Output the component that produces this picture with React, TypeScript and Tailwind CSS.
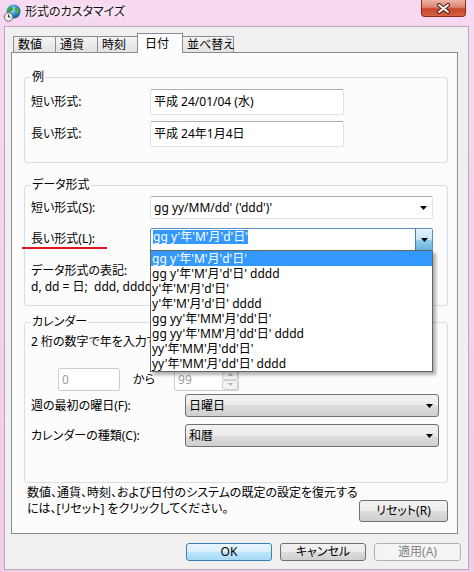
import React from 'react';

const grayFace =
  'bg-[linear-gradient(to_bottom,#f2f2f2_0%,#ebebeb_50%,#dddddd_50%,#cfcfcf_100%)] border border-[#707070] rounded-[3px]';

function Arrow() {
  return (
    <svg width="7" height="4" viewBox="0 0 7 4">
      <path d="M0 0h7L3.5 4z" fill="#000" />
    </svg>
  );
}

function GlobeIcon() {
  return (
    <svg width="18" height="18" viewBox="0 0 18 18" className="ml-[3px] mt-[4px] shrink-0">
      <defs>
        <radialGradient id="globe" cx="40%" cy="35%" r="70%">
          <stop offset="0" stopColor="#c8ecff" />
          <stop offset="0.55" stopColor="#2f8fd8" />
          <stop offset="1" stopColor="#0c4b95" />
        </radialGradient>
      </defs>
      <circle cx="10.5" cy="7.5" r="7" fill="url(#globe)" />
      <path d="M7.5 2.5c2 0 3 1.5 2.5 3s-2 1-2.5 2.5S6.5 10 5.5 9 5 3.5 7.5 2.5z" fill="#3fa33a" />
      <path d="M12.5 4c1.5-.5 3 .5 3.5 2s-.5 3-1.5 3.5-1.5-1-2-2S11 4.5 12.5 4z" fill="#4cae3c" />
      <circle cx="5.5" cy="13" r="4.3" fill="#ececec" stroke="#6f6f6f" strokeWidth="1" />
      <path d="M5.5 10.5V13h2" stroke="#333" strokeWidth="1" fill="none" />
    </svg>
  );
}

function CloseGlyph() {
  return (
    <svg width="13" height="11" viewBox="0 0 13 11">
      <path d="M2 2l9 7M11 2l-9 7" stroke="#4a1d16" strokeWidth="4" strokeLinecap="round" />
      <path d="M2 2l9 7M11 2l-9 7" stroke="#fff" strokeWidth="2" strokeLinecap="round" />
    </svg>
  );
}

function Tab({ label, width, first }: { label: string; width: string; first?: boolean }) {
  return (
    <div
      className={
        'h-[16px] flex items-center pl-[4px] whitespace-nowrap border border-b-0 border-[#898c95] bg-[linear-gradient(to_bottom,#f3f3f3,#e2e2e2)] ' +
        width +
        (first ? '' : ' -ml-px')
      }
    >
      {label}
    </div>
  );
}

function TextRow({ label, value }: { label: string; value: string }) {
  return (
    <div className="flex items-center">
      <div className="w-[119px] shrink-0">{label}</div>
      <div className="w-[194px] h-[26px] flex items-center px-[3px] bg-white border border-[#dde2e8] border-t-[#abadb3] rounded-[2px]">
        {value}
      </div>
    </div>
  );
}

function GrayCombo({ label, value }: { label: string; value: string }) {
  return (
    <div className="flex items-center">
      <div className="w-[154px] shrink-0">{label}</div>
      <div className={'w-[254px] h-[23px] flex items-center pl-[3px] pr-[5px] ' + grayFace}>
        <span className="flex-1">{value}</span>
        <Arrow />
      </div>
    </div>
  );
}

const LONG_FORMATS = [
  "gg y'年'M'月'd'日'",
  "gg y'年'M'月'd'日' dddd",
  "y'年'M'月'd'日'",
  "y'年'M'月'd'日' dddd",
  "gg yy'年'MM'月'dd'日'",
  "gg yy'年'MM'月'dd'日' dddd",
  "yy'年'MM'月'dd'日'",
  "yy'年'MM'月'dd'日' dddd",
];

export default function App() {
  return (
    <div className="w-[474px] h-[572px] flex flex-col overflow-hidden bg-[linear-gradient(to_bottom,#f7d8f1,#f1cbea)] font-['Noto_Sans','Noto_Sans_CJK_JP',sans-serif] [font-feature-settings:'palt'] text-[12px] leading-[16px] text-black">
      {/* title bar */}
      <div className="h-[26px] shrink-0 flex items-start">
        <GlobeIcon />
        <div className="ml-[4px] mt-[4px] text-[#111] [text-shadow:0_0_6px_#fff,0_0_10px_#fff]">
          形式のカスタマイズ
        </div>
        <div className="ml-auto mr-[8px] w-[45px] h-[17px] flex items-center justify-center rounded-b-[4px] border border-t-0 border-[#8e2c1e] bg-[linear-gradient(to_bottom,#eeb5a6_0%,#de8470_45%,#c9452e_55%,#d6603f_100%)]">
          <CloseGlyph />
        </div>
      </div>

      {/* client area */}
      <div className="flex-1 ml-[4px] mr-[5px] mb-[2px] bg-[#f0f0f0] border border-[#b9a9b6] flex flex-col pt-[6px] pl-[6px]">
        {/* tabs */}
        <div className="h-[19px] flex items-end pl-[2px]">
          <Tab label="数値" width="w-[43px]" first />
          <Tab label="通貨" width="w-[43px]" />
          <Tab label="時刻" width="w-[43px]" />
          <div className="relative z-10 -ml-[3px] -mb-px h-[20px] w-[46px] pl-[7px] pt-[2px] bg-[#fcfcfc] border border-b-0 border-[#898c95]">
            日付
          </div>
          <Tab label="並べ替え" width="w-[52px]" />
        </div>

        {/* tab page */}
        <div className="w-[447px] h-[482px] shrink-0 bg-[#fcfcfc] border border-[#898c95] flex flex-col pl-[12px] pr-[9px]">
          {/* 例 */}
          <fieldset className="mt-[16px] border border-[#d5dfe5] rounded-[3px] pl-[6px] pt-[4px] pb-[15px]">
            <legend className="px-[1px]">例</legend>
            <div className="flex flex-col gap-[6px]">
              <TextRow label="短い形式:" value="平成 24/01/04 (水)" />
              <TextRow label="長い形式:" value="平成 24年1月4日" />
            </div>
          </fieldset>

          {/* データ形式 */}
          <fieldset className="mt-[14px] border border-[#d5dfe5] rounded-[3px] pl-[6px] pt-[3px] pb-[10px]">
            <legend className="px-[1px]">データ形式</legend>
            <div className="flex items-center">
              <div className="w-[119px] shrink-0">短い形式(S):</div>
              <div className="w-[283px] h-[23px] flex items-center pl-[3px] pr-[5px] bg-white border border-[#dde2e8] border-t-[#abadb3] rounded-[2px]">
                <span className="flex-1 whitespace-pre">gg yy/MM/dd' ('ddd')'</span>
                <Arrow />
              </div>
            </div>
            <div className="mt-[9px] flex items-center">
              <div className="w-[119px] shrink-0">
                <span className="inline-block -ml-[9px] pl-[9px] pr-[12px] border-b-2 border-[#e0141e]">長い形式(L):</span>
              </div>
              <div className="relative w-[283px] h-[23px] flex bg-white border border-[#5b8fc2] rounded-[2px]">
                <div className="flex-1 flex items-start pt-[1px] pl-[2px]">
                  <span className="h-[14px] leading-[14px] bg-[#3399ff] text-white">gg y'年'M'月'd'日'</span>
                </div>
                <div className="w-[17px] flex items-center justify-center border-l border-[#3c7fb1] bg-[linear-gradient(to_bottom,#e5f4fc_0%,#c4e5f6_50%,#98d1ef_50%,#68b3db_100%)]">
                  <Arrow />
                </div>
                {/* open drop-down list */}
                <div className="absolute left-[-1px] top-full w-[283px] z-20 bg-white border border-[#646464] shadow-[3px_3px_3px_rgba(0,0,0,0.3)] flex flex-col">
                  {LONG_FORMATS.map((f, i) => (
                    <div
                      key={f}
                      className={
                        'h-[15px] leading-[15px] pl-[1px] whitespace-pre ' +
                        (i === 0 ? 'bg-[#3399ff] text-white' : '')
                      }
                    >
                      {f}
                    </div>
                  ))}
                </div>
              </div>
            </div>
            <div className="mt-[12px] whitespace-pre">
              <div>データ形式の表記:</div>
              <div>d, dd = 日;  ddd, dddd = 曜日;  M = 月;  y = 年</div>
            </div>
          </fieldset>

          {/* カレンダー */}
          <fieldset className="mt-[8px] border border-[#d5dfe5] rounded-[3px] pl-[6px] pt-[4px] pb-[35px]">
            <legend className="px-[1px]">カレンダー</legend>
            <div className="whitespace-nowrap">2 桁の数字で年を入力すると、次の範囲の年として解釈されます:</div>
            <div className="mt-[18px] ml-[27px] flex items-center text-[#9c9c9c]">
              <div className="w-[62px] h-[23px] flex items-center pl-[3px] border border-[#c9cdd2] rounded-[2px] bg-white">0</div>
              <div className="ml-[13px] text-black">から</div>
              <div className="ml-[19px] w-[65px] h-[23px] flex border border-[#c9cdd2] rounded-[2px] bg-white">
                <div className="flex-1 flex items-center pl-[3px]">99</div>
                <div className="w-[16px] flex flex-col">
                  <div className="flex-1 flex items-center justify-center border border-[#d0d3d6] rounded-[2px] bg-[#f2f2f2]">
                    <svg width="5" height="3" viewBox="0 0 5 3"><path d="M0 3h5L2.5 0z" fill="#b0b0b0" /></svg>
                  </div>
                  <div className="flex-1 flex items-center justify-center border border-[#d0d3d6] rounded-[2px] bg-[#f2f2f2]">
                    <svg width="5" height="3" viewBox="0 0 5 3"><path d="M0 0h5L2.5 3z" fill="#b0b0b0" /></svg>
                  </div>
                </div>
              </div>
            </div>
            <div className="mt-[3px] flex flex-col gap-[7px]">
              <GrayCombo label="週の最初の曜日(F):" value="日曜日" />
              <GrayCombo label="カレンダーの種類(C):" value="和暦" />
            </div>
          </fieldset>

          {/* reset */}
          <div className="mt-[2px] flex items-start justify-between">
            <div className="ml-[3px] whitespace-nowrap">
              <div>数値、通貨、時刻、および日付のシステムの既定の設定を復元する</div>
              <div>には、[リセット] をクリックしてください。</div>
            </div>
            <div className={'mt-[15px] shrink-0 w-[89px] h-[22px] flex items-center justify-center ' + grayFace}>リセット(R)</div>
          </div>
        </div>

        {/* dialog buttons */}
        <div className="mt-[9px] flex justify-end gap-[8px] pr-[7px]">
          <div className="w-[86px] h-[18px] flex items-center justify-center rounded-[3px] border border-[#3c7fb1] bg-[linear-gradient(to_bottom,#eaf6fd_0%,#d9f0fc_50%,#bee6fd_50%,#a7d9f5_100%)]">
            OK
          </div>
          <div className={'w-[86px] h-[18px] flex items-center justify-center ' + grayFace}>キャンセル</div>
          <div className="w-[87px] h-[18px] flex items-center justify-center rounded-[3px] border border-[#adb2b5] bg-[#f4f4f4] text-[#838383]">
            適用(A)
          </div>
        </div>
      </div>
    </div>
  );
}
